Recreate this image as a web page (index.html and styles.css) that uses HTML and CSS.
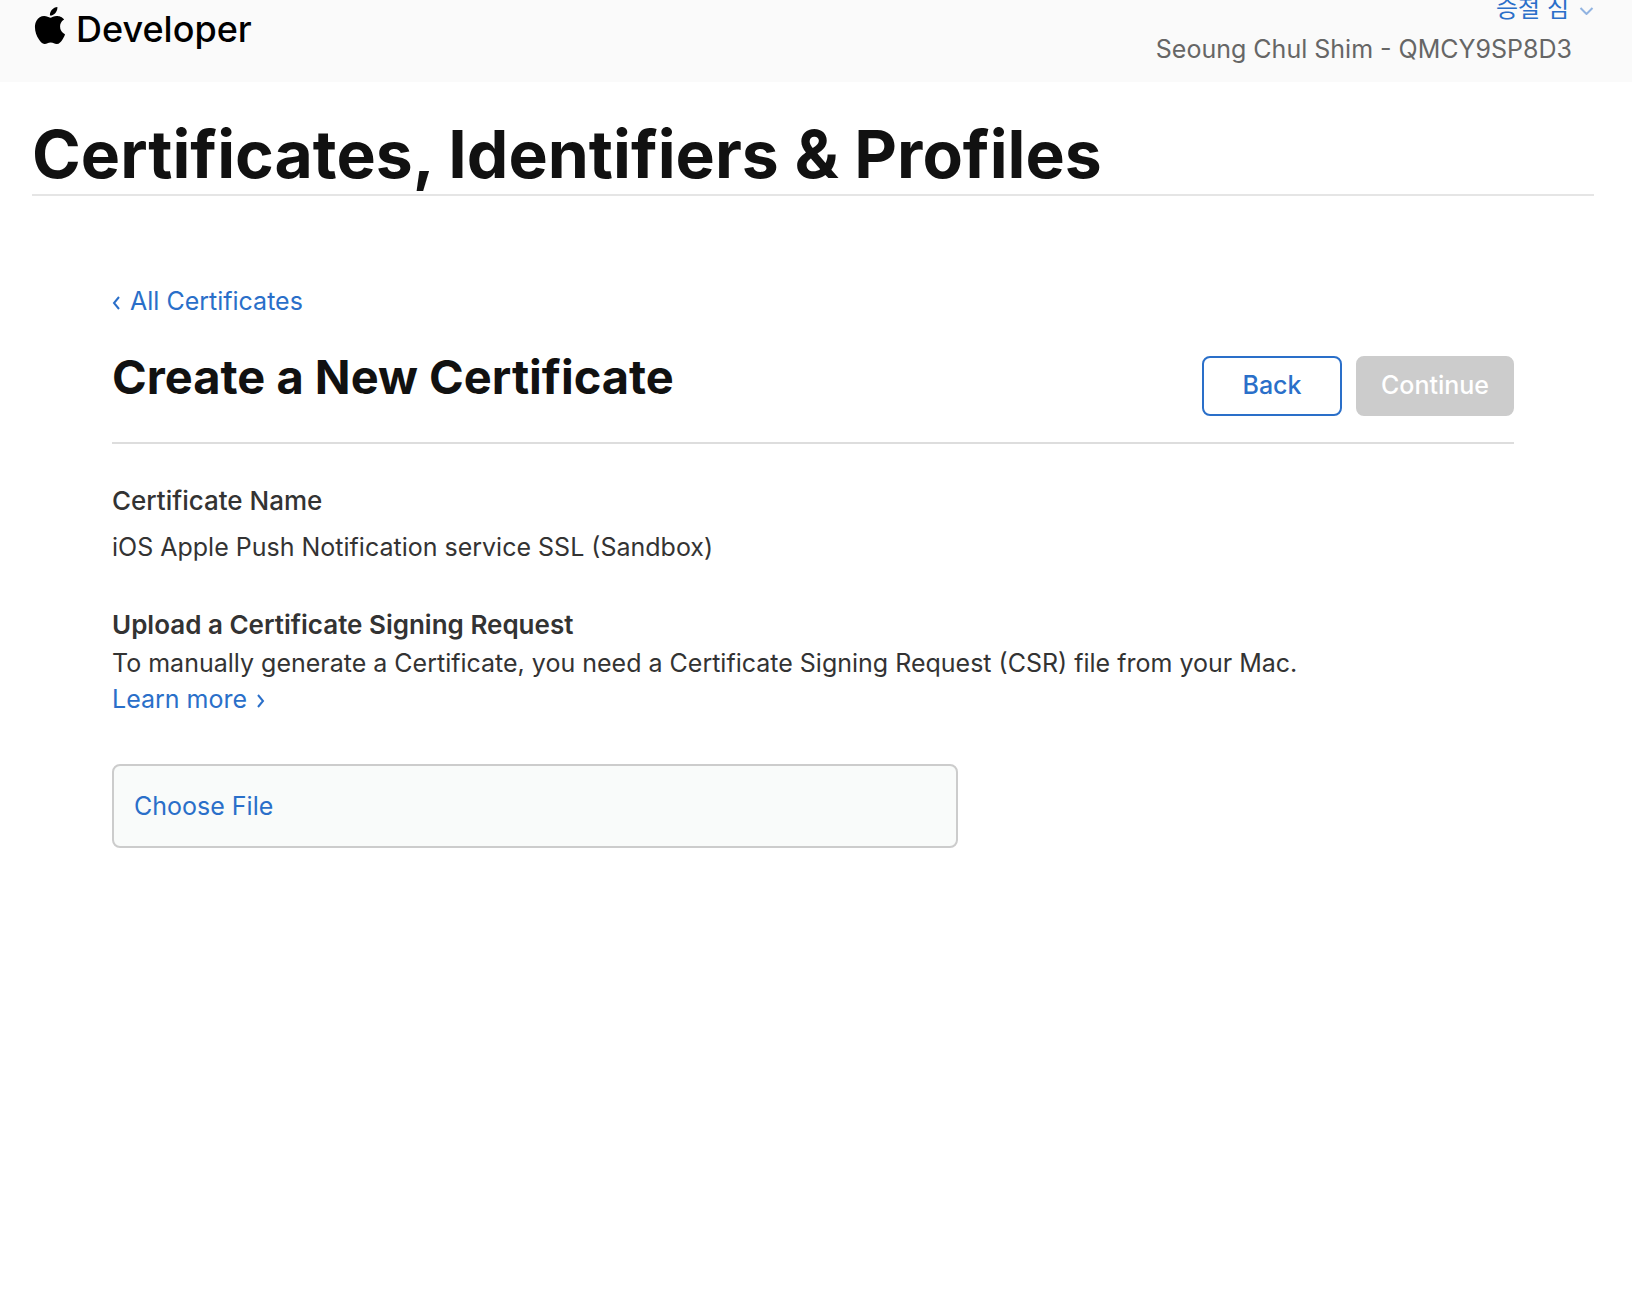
FILE: index.html
```html
<!DOCTYPE html>
<html lang="en">
<head>
  <meta charset="utf-8">
  <meta name="viewport" content="width=device-width, initial-scale=1">
  <title>Certificates, Identifiers &amp; Profiles - Apple Developer</title>
  <link rel="stylesheet" href="styles.css">
</head>
<body>
  <header class="site-header">
    <a class="brand" href="#">
      <svg class="brand-mark" viewBox="2 0 20 24" aria-hidden="true"><path d="M12.152 6.896c-.948 0-2.415-1.078-3.96-1.04-2.04.027-3.91 1.183-4.961 3.014-2.117 3.675-.546 9.103 1.519 12.09 1.013 1.454 2.208 3.09 3.792 3.039 1.52-.065 2.09-.987 3.935-.987 1.831 0 2.35.987 3.96.948 1.637-.026 2.676-1.48 3.676-2.948 1.156-1.688 1.636-3.325 1.662-3.415-.039-.013-3.182-1.221-3.22-4.857-.026-3.04 2.48-4.494 2.597-4.559-1.429-2.09-3.623-2.324-4.39-2.376-2-.156-3.675 1.09-4.61 1.09zM15.53 3.83c.843-1.012 1.4-2.427 1.245-3.83-1.207.052-2.662.805-3.532 1.818-.78.896-1.454 2.338-1.273 3.714 1.338.104 2.715-.688 3.559-1.701"/></svg>
      <span>Developer</span>
    </a>
    <div class="account">
      <button class="account-menu" type="button">
        <span lang="ko">승철 심</span>
        <svg class="account-chevron" viewBox="0 0 14 8" aria-hidden="true"><path d="M1 1l6 6 6-6"/></svg>
      </button>
      <span class="account-team">Seoung Chul Shim - QMCY9SP8D3</span>
    </div>
  </header>

  <main class="page">
    <h1 class="page-title">Certificates, Identifiers &amp; Profiles</h1>

    <div class="content">
      <a class="link back-link" href="#"><svg class="chevron" viewBox="0 0 9 16" aria-hidden="true"><path d="M7 2L2 8l5 6"/></svg>All Certificates</a>

      <div class="toolbar">
        <h2 class="toolbar-title">Create a New Certificate</h2>
        <div class="toolbar-actions">
          <button class="button button-back" type="button">Back</button>
          <button class="button button-continue" type="button" disabled>Continue</button>
        </div>
      </div>

      <section class="field">
        <h3 class="field-label">Certificate Name</h3>
        <p class="text">iOS Apple Push Notification service SSL (Sandbox)</p>
      </section>

      <section class="upload">
        <h3 class="upload-title">Upload a Certificate Signing Request</h3>
        <p class="text">To manually generate a Certificate, you need a Certificate Signing Request (CSR) file from your Mac.</p>
        <a class="link learn-link" href="#">Learn more<svg class="chevron" viewBox="0 0 9 16" aria-hidden="true"><path d="M2 2l5 6-5 6"/></svg></a>
      </section>

      <label class="file-box" for="csr-file">Choose File
        <input class="file-input" id="csr-file" type="file">
      </label>
    </div>
  </main>
</body>
</html>
```

FILE: styles.css
```css
* {
  box-sizing: border-box;
}

body {
  margin: 0;
  background: #fff;
  color: #333;
  font-family: Inter, "Noto Sans CJK KR", sans-serif;
  font-size: 25px;
  line-height: 36px;
}

h1,
h2,
h3,
p {
  margin: 0;
}

button {
  font: inherit;
}

svg {
  flex: none;
  fill: none;
  stroke: currentColor;
}

.site-header {
  display: flex;
  justify-content: space-between;
  align-items: flex-end;
  height: 82px;
  padding: 0 38px 15px 34px;
  overflow: hidden;
  background: #fafafa;
}

.brand {
  display: flex;
  align-items: center;
  gap: 10px;
  padding-bottom: 14px;
  color: #000;
  font-size: 36px;
  font-weight: 500;
  line-height: 48px;
  text-decoration: none;
}

.brand-mark {
  width: 32px;
  height: 37px;
  margin-bottom: 8px;
  fill: currentColor;
  stroke: none;
}

.account {
  display: flex;
  flex-direction: column;
  align-items: flex-end;
  gap: 4px;
}

.account-menu {
  display: flex;
  align-items: center;
  gap: 10px;
  padding: 0;
  border: 0;
  background: none;
  color: #2a6fc9;
  font-size: 24px;
}

.account-chevron {
  width: 15px;
  height: 8px;
  margin-top: 4px;
  stroke-width: 2;
  opacity: 0.5;
}

.account-team {
  padding-right: 22px;
  color: #666;
}

.page {
  padding: 32px 38px 0 32px;
}

.page-title {
  border-bottom: 2px solid #e5e5e5;
  color: #111;
  font-size: 66px;
  font-weight: 700;
  line-height: 80px;
}

.content {
  padding: 87px 80px 48px;
}

.link {
  display: flex;
  align-items: center;
  gap: 9px;
  width: fit-content;
  color: #2a6fc9;
  text-decoration: none;
}

.chevron {
  width: 9px;
  height: 16px;
  margin-top: 4px;
  stroke-width: 2;
}

.toolbar {
  display: flex;
  justify-content: space-between;
  margin-top: 37px;
  padding-bottom: 26px;
  border-bottom: 2px solid #ddd;
}

.toolbar-title {
  color: #111;
  font-size: 47px;
  font-weight: 700;
  line-height: 42px;
}

.toolbar-actions {
  display: flex;
  gap: 14px;
}

.button {
  height: 60px;
  padding: 0 22px 2px;
  border: 2px solid #2a6fc9;
  border-radius: 8px;
  font-weight: 500;
}

.button-back {
  min-width: 140px;
  background: #fff;
  color: #2a6fc9;
}

.button-continue {
  min-width: 158px;
  border-color: #ccc;
  background: #ccc;
  color: #fff;
}

.field {
  display: grid;
  gap: 10px;
  margin-top: 39px;
}

.field-label {
  font-size: 26px;
  font-weight: 500;
}

.upload {
  margin-top: 42px;
}

.upload-title {
  margin-bottom: 2px;
  font-size: 26px;
  font-weight: 600;
}

.file-box {
  display: flex;
  align-items: center;
  max-width: 846px;
  height: 84px;
  margin-top: 47px;
  padding: 0 20px;
  border: 2px solid #ccc;
  border-radius: 8px;
  background: #f9fbfa;
  color: #2a6fc9;
  cursor: pointer;
}

.file-input {
  width: 1px;
  height: 1px;
  opacity: 0;
}
```
